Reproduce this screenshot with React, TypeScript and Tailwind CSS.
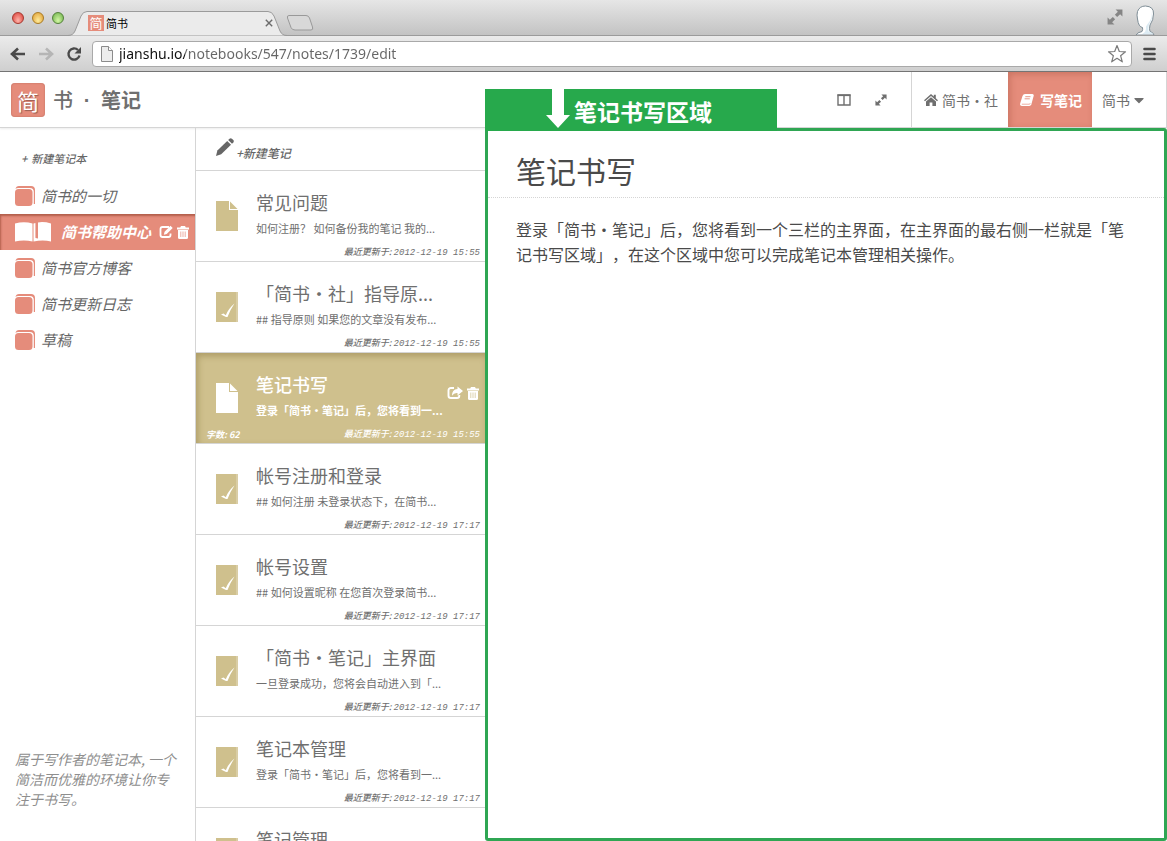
import React, { useState } from "react";
import { FaCaretDown } from "react-icons/fa";

type Note = {
	title: string;
	excerpt: string;
	updatedAt: string;
	published: boolean;
	words?: number;
};

const notebooks = [
	"简书的一切",
	"简书帮助中心",
	"简书官方博客",
	"简书更新日志",
	"草稿",
];

const notes: Note[] = [
	{
		title: "常见问题",
		excerpt: "如何注册？ 如何备份我的笔记 我的...",
		updatedAt: "2012-12-19 15:55",
		published: false,
	},
	{
		title: "「简书・社」指导原...",
		excerpt: "## 指导原则 如果您的文章没有发布...",
		updatedAt: "2012-12-19 15:55",
		published: true,
	},
	{
		title: "笔记书写",
		excerpt: "登录「简书・笔记」后，您将看到一...",
		updatedAt: "2012-12-19 15:55",
		published: false,
		words: 62,
	},
	{
		title: "帐号注册和登录",
		excerpt: "## 如何注册 未登录状态下，在简书...",
		updatedAt: "2012-12-19 17:17",
		published: true,
	},
	{
		title: "帐号设置",
		excerpt: "## 如何设置昵称 在您首次登录简书...",
		updatedAt: "2012-12-19 17:17",
		published: true,
	},
	{
		title: "「简书・笔记」主界面",
		excerpt: "一旦登录成功，您将会自动进入到「...",
		updatedAt: "2012-12-19 17:17",
		published: true,
	},
	{
		title: "笔记本管理",
		excerpt: "登录「简书・笔记」后，您将看到一...",
		updatedAt: "2012-12-19 17:17",
		published: true,
	},
	{
		title: "笔记管理",
		excerpt: "登录「简书・笔记」后，您将看到一...",
		updatedAt: "2012-12-19 17:17",
		published: true,
	},
];

function ResizeIcon({ className }: { className: string }) {
	return (
		<svg viewBox="0 0 14 14" fill="currentColor" className={className}>
			<path d="M7.500.5h6v6l-2-2-2.600 2.600-2-2L9.500 2.500zM6.500 13.500h-6v-6l2 2 2.600-2.600 2 2-2.600 2.600z" />
		</svg>
	);
}

function ColumnsIcon() {
	return (
		<svg viewBox="0 0 14 12" fill="none" stroke="currentColor" className="h-3 w-3.5">
			<path d="M1 1h12v10H1zM7 1v10" strokeWidth="1.400" />
			<path d="M.5 1.300h13" strokeWidth="1.600" />
		</svg>
	);
}

function HomeIcon() {
	return (
		<svg viewBox="0 0 14 12" fill="currentColor" className="h-3 w-3.5">
			<path d="M7 0l2.800 2.500V.8h2v3.500L14 6.300l-1 1L7 2 1 7.300l-1-1z" />
			<path d="M7 3.200l5 4.300V12H8.400V8.400H5.600V12H2V7.500z" />
		</svg>
	);
}

function SlantedBookIcon() {
	return (
		<svg viewBox="0 0 14 12" className="h-3 w-3.5">
			<path
				d="M5 0h7.500q1.500.2 1.200 1.800l-2.300 8.400Q10.800 12 9.300 12H1.800Q-.3 11.500.2 9.500L2.500 2Q3.200 0 5 0z"
				fill="#fff"
			/>
			<path d="M5.300 2.700h5.200M4.600 4.800h5.200" stroke="#e58c7b" strokeWidth=".9" />
			<path d="M1.800 10.200h7.800l.6-1" stroke="#e58c7b" strokeWidth=".7" fill="none" />
		</svg>
	);
}

function PencilIcon() {
	return (
		<svg viewBox="0 0 18 18" fill="currentColor" className="mr-0.5 mb-1 h-[18px] w-[18px]">
			<path d="M11.200 3L15 6.800 5.200 16.200 0 18l1.400-5.500z" />
			<path d="M12.200 2l1.300-1.300q1.200-1 2.400 0l1.400 1.400q1 1.200 0 2.400L16 5.800z" />
		</svg>
	);
}

function EditIcon() {
	return (
		<svg viewBox="0 0 14 14" className="h-3.5 w-3.5">
			<path
				d="M10 2H3.500Q1.500 2 1.500 4v6q0 2 2 2h6q2 0 2-2V8.500"
				fill="none"
				stroke="#fff"
				strokeWidth="1.800"
			/>
			<path d="M11.500.8l2.200 2.200-6 6L4.800 9.800l.8-3z" fill="#fff" />
		</svg>
	);
}

function ShareIcon() {
	return (
		<svg viewBox="0 0 16 14" className="h-3.5 w-4">
			<path
				d="M7 2H4Q1.500 2 1.500 4.300v5.400Q1.500 12 4 12h6q2.300 0 2.300-2.300V9"
				fill="none"
				stroke="#fff"
				strokeWidth="1.900"
			/>
			<path d="M10.500.5L16 5l-5.500 4.500V7Q7 6.500 5 9.800 4.800 3.500 10.500 3z" fill="#fff" />
		</svg>
	);
}

function TrashIcon({ lines }: { lines: string }) {
	return (
		<svg viewBox="0 0 12 13" className="h-[13px] w-3">
			<path d="M4 0h4l.8 1.500H12v2H0v-2h3.200z" fill="#fff" />
			<path d="M1 4h10v7.500Q11 13 9.500 13h-7Q1 13 1 11.500z" fill="#fff" />
			<path d="M3.800 5.500v5.500M6 5.500v5.500M8.200 5.500v5.500" stroke={lines} strokeWidth=".7" />
		</svg>
	);
}

function ClosedBookIcon() {
	return (
		<svg viewBox="0 0 20 20" className="h-5 w-5 shrink-0">
			<path
				d="M4 0h12q4 0 4 4v14h-1.200V6q0-4-4-4H3.200Q1.500 2 .5 3 1 0 4 0z"
				fill="#e58c7b"
			/>
			<rect y="3" width="17.500" height="17" rx="3.500" fill="#e58c7b" />
		</svg>
	);
}

function OpenBookIcon() {
	return (
		<svg viewBox="0 0 36 20" fill="#fff" className="h-5 w-9 shrink-0">
			<path d="M0 1.500Q9-1 17.500 1.500v18Q9 17.500 0 19.500z" />
			<path d="M18.500 1.500l2-.6V16l2.500.5V.4Q29-.6 36 1.500v18q-8-2-17.500 0z" />
			<path d="M21.300 1v14.500" stroke="#e58c7b" strokeWidth=".8" />
		</svg>
	);
}

function PageIcon({ published, active }: { published: boolean; active: boolean }) {
	const color = active ? "#fff" : "#cfc08d";
	if (published) {
		return (
			<svg viewBox="0 0 22 30" className="h-[30px] w-[22px] shrink-0">
				<path d="M0 0h22v30H0z" fill="#d9cda5" />
				<path d="M0 0h20v30H0z" fill={color} />
				<path d="M5 22.500l2.500-1 2.300 1.700Q12.500 16.500 18.500 11.500q-4.500 6.500-7 13.500H10z" fill="#fff" />
			</svg>
		);
	}
	return (
		<svg viewBox="0 0 22 30" className="h-[30px] w-[22px] shrink-0">
			<path d="M0 0h13v9h9v21H0z" fill={color} />
			<path d="M14 .5L21.500 8H14z" fill={color} />
		</svg>
	);
}

function BrowserChrome() {
	return (
		<div className="shrink-0 border-b border-[#757575]">
			<div className="flex h-9 items-end border-b border-[#9b9b9b] bg-linear-to-b from-[#e6e6e6] to-[#c3c3c3] pl-3">
				<div className="mb-[11px] flex gap-2">
					<span className="h-3 w-3 rounded-full border border-[#a5382f] bg-radial-[at_50%_75%] from-[#ffb5ab] to-[#d93a32]" />
					<span className="h-3 w-3 rounded-full border border-[#a97b24] bg-radial-[at_50%_75%] from-[#ffec9c] to-[#dd9a2c]" />
					<span className="h-3 w-3 rounded-full border border-[#53813a] bg-radial-[at_50%_75%] from-[#d4f7a6] to-[#69ae45]" />
				</div>
				<div className="relative -mb-px ml-1 h-[26px] w-56">
					<svg viewBox="0 0 224 26" className="absolute inset-0 h-full w-full">
						<path
							d="M0 25.500Q5 25.500 7 21l6-15Q15 1.500 19 1.500h181q4 0 6 4.500l6 15q2 4.500 7 4.500"
							fill="#ebebeb"
							stroke="#9b9b9b"
						/>
					</svg>
					<div className="relative flex h-full items-center gap-0.5 pr-[17px] pl-5">
						<span className="flex h-4 w-4 items-center justify-center bg-[#e58c7b] text-[13px] text-white">
							简
						</span>
						<span className="flex-1 text-[11px] text-black">简书</span>
						<button aria-label="关闭标签页" className="p-0.5">
							<svg viewBox="0 0 8 8" className="h-2 w-2">
								<path d="M.8.8l6.400 6.400M7.200.8L.8 7.200" stroke="#6b6b6b" strokeWidth="1.400" />
							</svg>
						</button>
					</div>
				</div>
				<button aria-label="新标签页" className="mb-1 -ml-1.5">
					<svg viewBox="0 0 28 16" className="h-4 w-7">
						<path
							d="M3 .5h17q2.500 0 3.500 2.500l3 9q1 3-1.500 3H9q-3 0-4-2.500L1.500 3Q.8.5 3 .5z"
							fill="#d8d8d8"
							stroke="#999"
						/>
					</svg>
				</button>
				<div className="ml-auto flex items-end gap-3 pr-3">
					<ResizeIcon className="mb-2.5 h-4 w-4 text-[#858585]" />
					<svg viewBox="0 0 20 30" className="h-[30px] w-5">
						<path
							d="M1 30q1-2.500 6-3.500 1-2 .5-4Q3.500 22 2.500 14q-1-4 0-7.500Q4.500 1 10.500 1 19 1.500 18.500 9q0 6-3.500 11-1 4 0 6.500 3.500 1 4 3.500z"
							fill="#fff"
							stroke="#7e8d96"
						/>
						<path
							d="M16.500 6q1 6-2 10.500-2 2.500-3.500 5 .5 3-1 5.500L7 29h11q-1-2-4.500-2.500-.5-4 .5-7Q18.500 13 16.500 6z"
							fill="#dcebf3"
						/>
					</svg>
				</div>
			</div>
			<div className="flex h-[35px] items-center bg-linear-to-b from-[#ebebeb] to-[#cfcfcf] pl-2.5 text-[#4a4a4a]">
				<button aria-label="后退">
					<svg viewBox="0 0 16 14" className="h-3.5 w-4" fill="none" stroke="currentColor">
						<path d="M15 7H3M8 1.500L2 7l6 5.500" strokeWidth="2.600" />
					</svg>
				</button>
				<button aria-label="前进" className="ml-3 text-[#b5b5b5]">
					<svg viewBox="0 0 16 14" className="h-3.5 w-4" fill="none" stroke="currentColor">
						<path d="M1 7h12M8 1.500L14 7l-6 5.500" strokeWidth="2.600" />
					</svg>
				</button>
				<button aria-label="重新加载" className="ml-3">
					<svg viewBox="0 0 16 16" className="h-4 w-4" fill="none">
						<path d="M13.500 9.500A5.600 5.600 0 1 1 12 4" stroke="currentColor" strokeWidth="2.400" />
						<path d="M15 1v6.500H8.500z" fill="currentColor" />
					</svg>
				</button>
				<div className="ml-2.5 flex h-[26px] flex-1 items-center rounded-[4px] border border-[#a9a9a9] bg-white pr-1 pl-2">
					<svg viewBox="0 0 12 16" className="h-4 w-3" fill="#ededed" stroke="#8b8b8b">
						<path d="M.5.5h7l4 4v11H.5z" />
						<path d="M7.500.5v4h4" fill="#fff" />
					</svg>
					<input
						aria-label="地址"
						defaultValue="jianshu.io/notebooks/547/notes/1739/edit"
						className="ml-1.5 flex-1 bg-[linear-gradient(to_right,#111_66px,#666_66px)] bg-clip-text font-['Noto_Sans','Noto_Sans_CJK_SC',sans-serif] text-sm text-transparent caret-black outline-none"
					/>
					<button aria-label="收藏">
						<svg viewBox="0 0 20 20" className="h-5 w-5" fill="#fff" stroke="#7a7a7a">
							<path
								d="M10 1.500l2.300 6 6.200.3-4.900 3.900 1.700 6.100L10 14.300l-5.300 3.500 1.700-6.100L1.500 7.800l6.200-.3z"
								strokeWidth="1.200"
								strokeLinejoin="round"
							/>
						</svg>
					</button>
				</div>
				<button aria-label="菜单" className="mr-[11px] ml-[11px]">
					<svg viewBox="0 0 13 14" className="h-3.5 w-[13px]" stroke="currentColor">
						<path d="M1.500 2h10M1.500 7h10M1.500 12h10" strokeWidth="2.600" strokeLinecap="round" />
					</svg>
				</button>
			</div>
		</div>
	);
}

function Header() {
	return (
		<header className="flex h-14 shrink-0 items-stretch border-b border-[#d5d5d5] text-[#6f6f6f] shadow-[0_1px_2px_rgba(0,0,0,0.08)]">
			<a href="#" className="ml-[11px] flex items-center text-xl leading-none">
				<span className="flex h-[34px] w-[34px] items-center justify-center rounded-[4px] bg-[#e58c7b] text-[22px] leading-8 text-white shadow-[inset_0_0_2px_#b86a5b] [text-shadow:1px_1px_1px_rgba(0,0,0,0.35)]">
					简
				</span>
				<span className="ml-2 font-medium">书</span>
				<span className="mx-1 w-5 text-center font-['Liberation_Sans',sans-serif] font-bold">·</span>
				<span className="font-bold">笔记</span>
			</a>
			<nav className="ml-auto flex items-stretch border-r border-[#d5d5d5] text-sm">
				<div className="flex items-center gap-6 pr-6">
					<button aria-label="分栏">
						<ColumnsIcon />
					</button>
					<button aria-label="全屏">
						<ResizeIcon className="h-3 w-3" />
					</button>
				</div>
				<a href="#" className="flex items-center gap-1 border-l border-[#d5d5d5] pr-2.5 pl-3">
					<HomeIcon />
					简书・社
				</a>
				<a
					href="#"
					className="flex items-center gap-1.5 bg-[#e58c7b] pr-2.5 pl-3 font-bold text-white shadow-[inset_2px_2px_6px_rgba(140,60,40,0.3)]"
				>
					<SlantedBookIcon />
					写笔记
				</a>
				<button className="flex items-center gap-0.5 pr-5 pl-2.5">
					简书
					<FaCaretDown className="h-4 w-3.5" />
				</button>
			</nav>
		</header>
	);
}

function Sidebar() {
	const [current, setCurrent] = useState(1);

	return (
		<aside className="flex w-[196px] shrink-0 flex-col border-r border-[#d5d5d5] italic">
			<button className="mt-5 mb-4 ml-[21px] flex gap-1 self-start text-[11px] leading-5 font-medium text-[#666]">
				<span>+</span>
				<span>新建笔记本</span>
			</button>
			<ul className="-mt-1.5 text-[15px] text-[#666]">
				{notebooks.map((name, index) =>
					index === current ? (
						<li
							key={name}
							className="flex h-9 items-center bg-[#e58c7b] pl-[15px] text-white shadow-[inset_1px_2px_2px_rgba(120,40,20,0.45)]"
						>
							<OpenBookIcon />
							<span className="ml-2.5 font-bold">{name}</span>
							<button aria-label="重命名" className="ml-2">
								<EditIcon />
							</button>
							<button aria-label="删除笔记本" className="ml-1">
								<TrashIcon lines="#e58c7b" />
							</button>
						</li>
					) : (
						<li key={name}>
							<button
								onClick={() => setCurrent(index)}
								className="flex h-9 w-full items-center gap-1.5 pl-[15px] italic"
							>
								<ClosedBookIcon />
								{name}
							</button>
						</li>
					)
				)}
			</ul>
			<p className="mt-auto mb-8 pr-4 pl-[15px] text-sm leading-5 text-[#8e8e8e]">
				属于写作者的笔记本, 一个简洁而优雅的环境让你专注于书写。
			</p>
		</aside>
	);
}

function NoteItem({ note, active }: { note: Note; active: boolean }) {
	return (
		<li
			className={
				active
					? "relative flex h-[91px] border-b border-[#d5d5d5] bg-[#cfc08d] pl-5 font-bold text-white shadow-[inset_2px_3px_6px_rgba(110,90,30,0.35)]"
					: "relative flex h-[91px] border-b border-[#d5d5d5] pl-5 text-[#6f6f6f]"
			}
		>
			<div className="pt-[30px]">
				<PageIcon published={note.published} active={active} />
			</div>
			<div className="ml-[18px] pt-[19px]">
				<h3 className={active ? "text-lg leading-6 font-medium" : "text-lg leading-6 font-normal"}>
					{note.title}
				</h3>
				<p className="mt-1 text-[11px] leading-5 whitespace-nowrap">{note.excerpt}</p>
			</div>
			{active && (
				<div className="mt-8 mr-1.5 ml-auto flex h-4 items-center gap-1">
					<button aria-label="分享">
						<ShareIcon />
					</button>
					<button aria-label="删除笔记">
						<TrashIcon lines="#cfc08d" />
					</button>
				</div>
			)}
			<div className="absolute inset-x-0 bottom-0 flex items-center pr-[5px] pl-2.5 text-[9px] leading-4 font-medium italic">
				{note.words && <span className="font-bold">字数: {note.words}</span>}
				<span className="ml-auto">
					最近更新于:{" "}
					<time className="font-['Liberation_Mono',monospace]">{note.updatedAt}</time>
				</span>
			</div>
		</li>
	);
}

function NoteList() {
	return (
		<section className="flex w-[289px] shrink-0 flex-col overflow-hidden">
			<button className="flex h-[43px] shrink-0 items-center border-b border-[#d5d5d5] pl-5 text-xs font-medium text-[#666] italic">
				<PencilIcon />
				<span className="mt-2">+新建笔记</span>
			</button>
			<ul>
				{notes.map((note, index) => (
					<NoteItem key={note.title} note={note} active={index === 2} />
				))}
			</ul>
		</section>
	);
}

function Editor() {
	return (
		<main className="relative flex min-w-0 flex-1 flex-col rounded-[3px] border-3 border-[#2fa653] bg-white text-[#4a4a4a]">
			{/* callout hanging above the writing area */}
			<div className="absolute -top-[42px] -left-[3px] flex h-[42px] w-[292px] items-start bg-[#27a94c]">
				<svg viewBox="0 0 24 39" fill="#fff" className="ml-[61px] h-[39px] w-6">
					<path d="M6 0h12v26h6L12 39 0 26h6z" />
				</svg>
				<span className="mt-1.5 ml-1 text-[23px] leading-8 font-bold text-white">
					笔记书写区域
				</span>
			</div>
			<input
				aria-label="标题"
				defaultValue="笔记书写"
				className="h-[67px] w-full border-b border-dotted border-[#d5d5d5] px-7 pt-4 pb-1 text-[30px] outline-none"
			/>
			<textarea
				aria-label="正文"
				defaultValue="登录「简书・笔记」后，您将看到一个三栏的主界面，在主界面的最右侧一栏就是「笔记书写区域」，在这个区域中您可以完成笔记本管理相关操作。"
				className="w-full flex-1 resize-none px-7 pt-[19px] text-base leading-[25px] outline-none [text-spacing-trim:space-all]"
			/>
		</main>
	);
}

export default function App() {
	return (
		<div
			lang="zh-CN"
			className="flex h-screen flex-col overflow-hidden bg-white font-['Noto_Sans_CJK_SC',sans-serif]"
		>
			<BrowserChrome />
			<Header />
			<div className="flex min-h-0 flex-1">
				<Sidebar />
				<NoteList />
				<Editor />
			</div>
		</div>
	);
}
